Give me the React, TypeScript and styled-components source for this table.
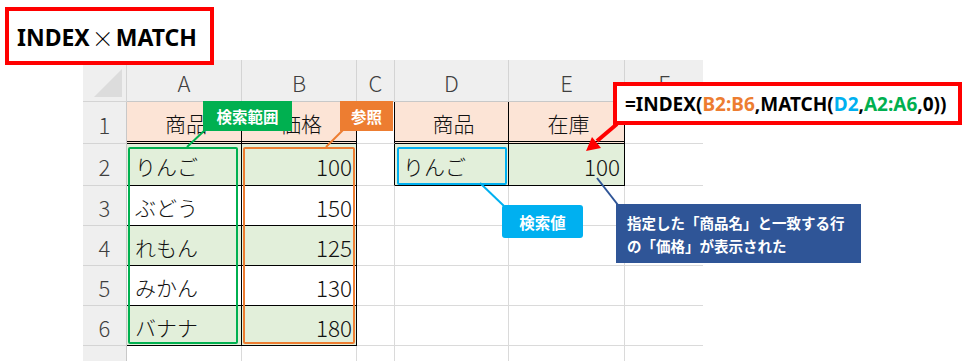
import styled, { createGlobalStyle } from 'styled-components';

const GlobalStyle = createGlobalStyle`
  html, body {
    margin: 0;
    padding: 0;
    background: #ffffff;
  }
  body {
    font-family: "Noto Sans CJK JP", "Noto Sans", sans-serif;
  }
`;

const COL_WIDTHS = [44, 115, 115, 38, 114, 116, 78];
const ROW_HEIGHTS = [42, 42, 42, 40, 40, 40, 40, 40];
const LETTERS = ['A', 'B', 'C', 'D', 'E', 'F'];

const DATA: string[][] = [
  ['商品', '価格', '', '商品', '在庫', ''],
  ['りんご', '100', '', 'りんご', '100', ''],
  ['ぶどう', '150', '', '', '', ''],
  ['れもん', '125', '', '', '', ''],
  ['みかん', '130', '', '', '', ''],
  ['バナナ', '180', '', '', '', ''],
  ['', '', '', '', '', ''],
];

const GRID = '1px solid #dadada';
const BLACK = '1px solid #000000';

const inTable = (r: number, c: number) =>
  (r >= 1 && r <= 6 && (c === 0 || c === 1)) || (r >= 1 && r <= 2 && (c === 3 || c === 4));

const Canvas = styled.div`
  position: relative;
  width: 965px;
  height: 361px;
  overflow: hidden;
  background: #ffffff;
`;

const Sheet = styled.div`
  margin: 60px 0 0 83px;
  display: grid;
  grid-template-columns: ${COL_WIDTHS.map((w) => `${w}px`).join(' ')};
  grid-template-rows: ${ROW_HEIGHTS.map((h) => `${h}px`).join(' ')};
  width: ${COL_WIDTHS.reduce((a, b) => a + b, 0)}px;
`;

const Corner = styled.div`
  position: relative;
  background: #efefef;
  border-right: 1px solid #d4d4d4;
  border-bottom: 1px solid #d4d4d4;
  box-sizing: border-box;

  &::after {
    content: '';
    position: absolute;
    right: 4px;
    bottom: 4px;
    width: 0;
    height: 0;
    border-left: 28px solid transparent;
    border-bottom: 28px solid #dcdcdc;
  }
`;

const Header = styled.div<{ $last?: boolean }>`
  background: #efefef;
  border-right: ${(p) => (p.$last ? 'none' : '1px solid #d4d4d4')};
  border-bottom: 1px solid #c8c8c8;
  box-sizing: border-box;
  display: flex;
  align-items: center;
  justify-content: center;
  color: #3f3f3f;
  font-family: "Noto Sans CJK JP", "Noto Sans", sans-serif;
  font-size: 22px;
  font-weight: 300;
  padding-top: 2px;
`;

const RowHead = styled.div`
  background: #efefef;
  border-right: 1px solid #c8c8c8;
  border-bottom: 1px solid #d4d4d4;
  box-sizing: border-box;
  display: flex;
  align-items: center;
  justify-content: center;
  color: #3f3f3f;
  font-family: "Noto Sans CJK JP", "Noto Sans", sans-serif;
  font-size: 22px;
  font-weight: 300;
  padding-top: 2px;
`;

const Cell = styled.div<{ $fill: string; $align: string; $right: string; $bottom: string; $num?: boolean }>`
  background: ${(p) => p.$fill};
  border-right: ${(p) => p.$right};
  border-bottom: ${(p) => p.$bottom};
  box-sizing: border-box;
  display: flex;
  align-items: center;
  justify-content: ${(p) => p.$align};
  padding: 3px 4px 0 8px;
  color: #111111;
  font-family: "Noto Sans CJK JP", sans-serif;
  font-size: ${(p) => (p.$num ? '22.5px' : '21px')};
  font-weight: 300;
  white-space: nowrap;
`;

const Frame = styled.div<{ $color: string; $x: number; $y: number; $w: number; $h: number }>`
  position: absolute;
  left: ${(p) => p.$x}px;
  top: ${(p) => p.$y}px;
  width: ${(p) => p.$w}px;
  height: ${(p) => p.$h}px;
  border: 2.5px solid ${(p) => p.$color};
  border-radius: 2px;
  box-sizing: border-box;
`;

const Tag = styled.div<{ $bg: string; $x: number; $y: number; $w: number; $h: number; $round?: boolean }>`
  position: absolute;
  left: ${(p) => p.$x}px;
  top: ${(p) => p.$y}px;
  width: ${(p) => p.$w}px;
  height: ${(p) => p.$h}px;
  background: ${(p) => p.$bg};
  border-radius: ${(p) => (p.$round ? '3px' : '0')};
  display: flex;
  align-items: center;
  justify-content: center;
  color: #ffffff;
  font-family: "Noto Sans CJK JP", sans-serif;
  font-weight: 700;
  font-size: 15.5px;
`;

const Note = styled.div`
  position: absolute;
  left: 616px;
  top: 204px;
  width: 245px;
  height: 59px;
  box-sizing: border-box;
  padding: 7px 0 0 11px;
  background: #2f5597;
  color: #ffffff;
  font-family: "Noto Sans CJK JP", sans-serif;
  font-weight: 700;
  font-size: 14.5px;
  line-height: 23px;
`;

const TitleBox = styled.div`
  position: absolute;
  left: 5px;
  top: 7px;
  width: 209px;
  height: 58px;
  box-sizing: border-box;
  border: 4px solid #ff0000;
  background: #ffffff;
  display: flex;
  align-items: center;
  padding: 2px 0 0 8px;
  color: #000000;
  font-family: "Noto Sans", "Noto Sans CJK JP", sans-serif;
  font-weight: 700;
  font-size: 23px;
`;

const Times = styled.span`
  font-family: "Noto Sans CJK JP", sans-serif;
  font-weight: 300;
  font-size: 22px;
  margin: 0 2px;
`;

const FormulaBox = styled.div`
  position: absolute;
  left: 613px;
  top: 82px;
  width: 349px;
  height: 43px;
  box-sizing: border-box;
  border: 4px solid #ff0000;
  background: #ffffff;
  display: flex;
  align-items: center;
  padding: 0 0 0 8px;
  color: #000000;
  font-family: "Noto Sans", sans-serif;
  font-weight: 700;
  font-size: 19px;
  white-space: nowrap;
`;

const Ref = styled.span<{ $color: string }>`
  color: ${(p) => p.$color};
`;

const Lines = styled.svg`
  position: absolute;
  left: 0;
  top: 0;
  pointer-events: none;
`;

const GREEN = '#00b050';
const ORANGE = '#ed7d31';
const BLUE = '#00b0f0';
const NAVY = '#2f5597';

function SheetGrid() {
  const cells: JSX.Element[] = [];
  cells.push(<Corner key="corner" />);
  LETTERS.forEach((l, c) => {
    cells.push(
      <Header key={`h${l}`} $last={c === LETTERS.length - 1}>
        {l}
      </Header>,
    );
  });
  DATA.forEach((row, r0) => {
    const r = r0 + 1;
    cells.push(<RowHead key={`r${r}`}>{r}</RowHead>);
    row.forEach((text, c) => {
      const table = inTable(r, c);
      const right =
        c === LETTERS.length - 1 ? 'none' : table || inTable(r, c + 1) ? BLACK : GRID;
      const bottom = table && r === 1 ? '3px double #000000' : table || inTable(r + 1, c) ? BLACK : GRID;
      let fill = '#ffffff';
      if (table && r === 1) fill = '#fce4d6';
      else if (table && r % 2 === 0) fill = '#e2efda';
      const isNum = /^\d+$/.test(text);
      const align = r === 1 ? 'center' : isNum ? 'flex-end' : 'flex-start';
      cells.push(
        <Cell key={`${r}-${c}`} $fill={fill} $align={align} $right={right} $bottom={bottom} $num={isNum}>
          {text}
        </Cell>,
      );
    });
  });
  return <Sheet>{cells}</Sheet>;
}

export default function App() {
  return (
    <Canvas>
      <GlobalStyle />
      <SheetGrid />

      <Frame $color={GREEN} $x={128} $y={147} $w={110} $h={197} />
      <Frame $color={ORANGE} $x={243} $y={147} $w={112} $h={197} />
      <Frame $color={BLUE} $x={397} $y={147} $w={110} $h={38} />

      <Lines width={965} height={361} viewBox="0 0 965 361">
        <line x1={205} y1={130} x2={187} y2={147} stroke={GREEN} strokeWidth={2} />
        <line x1={343} y1={130} x2={326} y2={147} stroke={ORANGE} strokeWidth={2} />
        <line x1={480} y1={183} x2={504} y2={206} stroke={BLUE} strokeWidth={2} />
        <line x1={597} y1={178} x2={618} y2={205} stroke={NAVY} strokeWidth={2} />
        <line x1={617} y1={124} x2={597} y2={141} stroke="#ff0000" strokeWidth={4} />
        <polygon points="586,151 601,148 592,137" fill="#ff0000" />
      </Lines>

      <Tag $bg={GREEN} $x={203} $y={101} $w={89} $h={30}>
        検索範囲
      </Tag>
      <Tag $bg={ORANGE} $x={340} $y={101} $w={53} $h={30}>
        参照
      </Tag>
      <Tag $bg={BLUE} $x={502} $y={205} $w={81} $h={33} $round>
        検索値
      </Tag>

      <Note>
        指定した「商品名」と一致する行
        <br />
        の「価格」が表示された
      </Note>

      <TitleBox>
        INDEX<Times>×</Times>MATCH
      </TitleBox>

      <FormulaBox>
        =INDEX(<Ref $color={ORANGE}>B2:B6</Ref>,MATCH(<Ref $color={BLUE}>D2</Ref>,
        <Ref $color={GREEN}>A2:A6</Ref>,0))
      </FormulaBox>
    </Canvas>
  );
}
